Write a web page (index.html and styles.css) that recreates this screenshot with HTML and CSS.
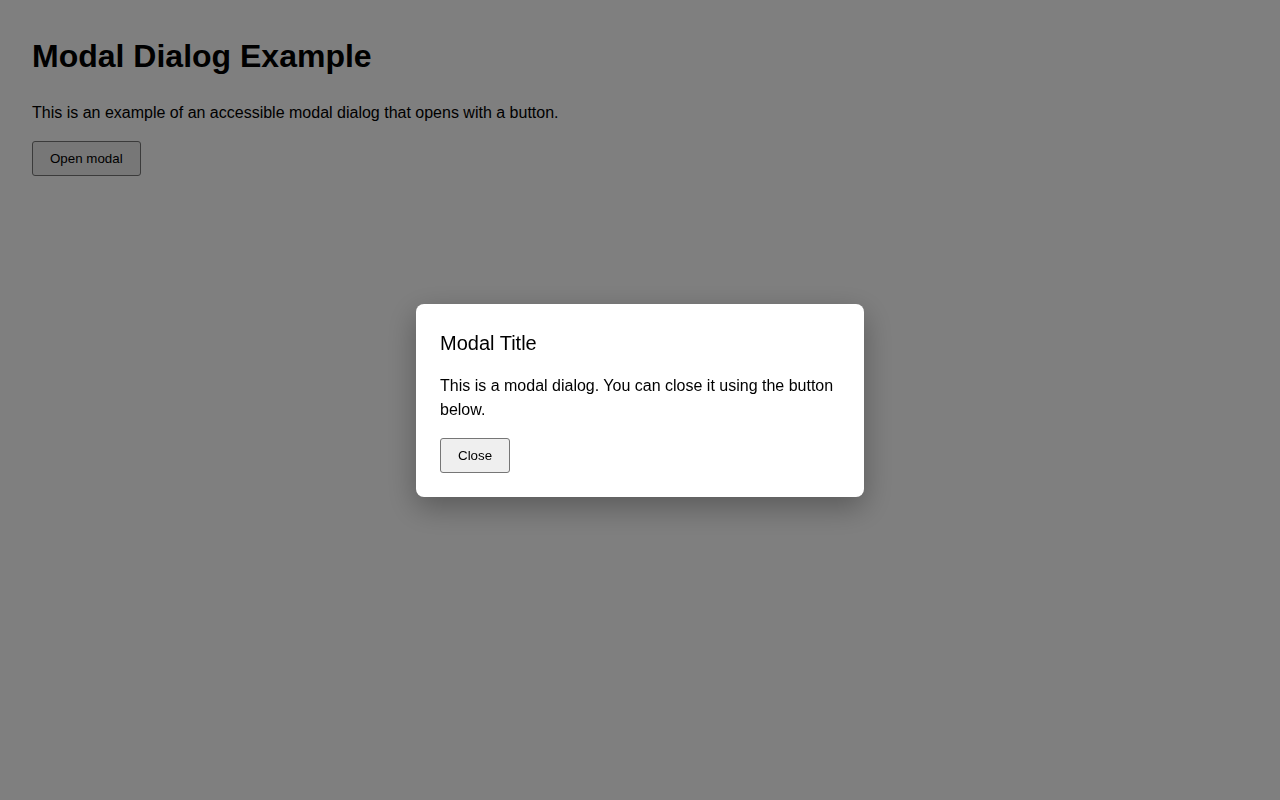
FILE: index.html
```html
<!DOCTYPE html>
<html lang="en">
<head>
    <meta charset="UTF-8">
    <meta name="viewport" content="width=device-width, initial-scale=1.0">
    <title>Modal Dialog Example</title>
    <link rel="stylesheet" href="styles.css">
</head>
<body>
    <main class="page">
        <h1>Modal Dialog Example</h1>
        <p>This is an example of an accessible modal dialog that opens with a button.</p>
        <button type="button" class="btn" id="openModal">Open modal</button>
    </main>

    <div class="overlay" id="overlay">
        <div class="modal" role="dialog" aria-modal="true" aria-labelledby="modalTitle">
            <h2 class="modal-title" id="modalTitle">Modal Title</h2>
            <p class="modal-text">This is a modal dialog. You can close it using the button below.</p>
            <button type="button" class="btn" id="closeModal">Close</button>
        </div>
    </div>
</body>
</html>
```

FILE: styles.css
```css
html, body {
    height: 100%;
}
body {
    margin: 0;
    font-family: "Liberation Sans", Arial, sans-serif;
    color: #000;
    background: #fff;
    line-height: 1.5;
}
.page {
    padding: 32px;
}
h1 {
    font-size: 32px;
    margin: 0 0 21px;
    line-height: 1.5;
}
p {
    margin: 0 0 16px;
    font-size: 16px;
}
.btn {
    font-family: "Liberation Sans", Arial, sans-serif;
    font-size: 13.333px;
    line-height: normal;
    padding: 9px 17px;
    background: #efefef;
    border: 1px solid #767676;
    border-radius: 3px;
    color: #000;
    cursor: pointer;
}
.overlay {
    position: fixed;
    inset: 0;
    background: rgba(0, 0, 0, 0.5);
    display: flex;
    align-items: center;
    justify-content: center;
}
.modal {
    width: 400px;
    padding: 24px;
    background: #fff;
    border-radius: 8px;
    box-shadow: 0 10px 30px rgba(0, 0, 0, 0.3);
}
.modal-title {
    font-size: 20px;
    font-weight: normal;
    line-height: 1.5;
    margin: 0 0 16px;
}
.modal-text {
    margin: 0 0 16px;
}
```
